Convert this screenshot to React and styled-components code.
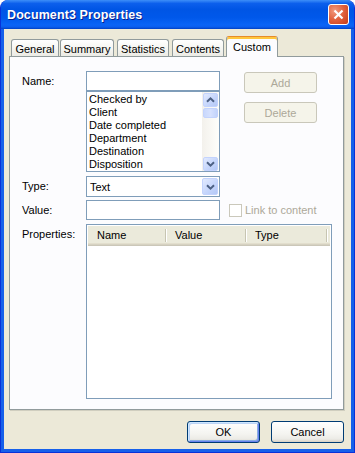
import styled, { createGlobalStyle } from 'styled-components';

const GlobalStyle = createGlobalStyle`
  html, body {
    margin: 0;
    padding: 0;
    background: #ffffff;
  }
  body {
    font-family: "Liberation Sans", Arial, sans-serif;
    font-size: 11px;
    color: #000;
  }
  * { box-sizing: border-box; }
`;

const Window = styled.div`
  width: 355px;
  height: 453px;
  display: flex;
  flex-direction: column;
  border-radius: 8px 8px 0 0;
  overflow: hidden;
  background: #1660ea;
  border: 1px solid #0831d9;
  border-top: 0;
`;

const TitleBar = styled.div`
  height: 29px;
  flex: none;
  display: flex;
  align-items: center;
  justify-content: space-between;
  padding: 0 5px 0 6px;
  background: linear-gradient(
    180deg,
    #3d8ef8 0%,
    #0c5fec 12%,
    #0055e5 32%,
    #0058ea 60%,
    #0a64f6 86%,
    #0b5eee 93%,
    #0040c4 100%
  );
`;

const Title = styled.div`
  color: #ffffff;
  font-weight: bold;
  font-size: 12.5px;
  letter-spacing: 0.1px;
  text-shadow: 1px 1px 0 #0a1e8a;
  margin-top: 1px;
`;

const CloseButton = styled.div`
  width: 21px;
  height: 21px;
  border: 1px solid #ffffff;
  border-radius: 3px;
  display: flex;
  align-items: center;
  justify-content: center;
  background: radial-gradient(circle at 30% 30%, #f29a7e 0%, #e0603c 50%, #c43b17 100%);
`;

const Body = styled.div`
  flex: 1;
  display: flex;
  flex-direction: column;
  margin: 0 3px 3px;
  padding: 7px 7px 6px 5px;
  background: #ece9d8;
`;

const TabRow = styled.div`
  height: 20px;
  flex: none;
  display: flex;
  align-items: flex-end;
  padding-left: 2px;
`;

const Tab = styled.div`
  width: ${p => p.$w}px;
  margin-right: ${p => p.$gap || 0}px;
  height: ${p => (p.$active ? 21 : 17)}px;
  margin-bottom: ${p => (p.$active ? -1 : 0)}px;
  position: relative;
  z-index: ${p => (p.$active ? 2 : 0)};
  display: flex;
  align-items: center;
  justify-content: center;
  padding-top: ${p => (p.$active ? 0 : 1)}px;
  border: 1px solid #919b9c;
  border-bottom: 0;
  border-radius: 3px 3px 0 0;
  background: ${p =>
    p.$active ? '#fcfcfe' : 'linear-gradient(180deg, #ffffff 0%, #f6f6f2 50%, #ecebe5 100%)'};
  border-top-color: ${p => (p.$active ? '#e68b2c' : '#919b9c')};
  box-shadow: ${p => (p.$active ? 'inset 0 2px 0 #ffc73c' : 'none')};
`;

const Panel = styled.div`
  flex: 1;
  display: flex;
  flex-direction: column;
  border: 1px solid #919b9c;
  background: #fcfcfe;
  padding: 14px 11px 10px 12px;
  box-shadow: 1px 1px 0 #d0cebf;
`;

const Row = styled.div`
  display: flex;
  align-items: ${p => p.$align || 'center'};
  margin-top: ${p => p.$mt || 0}px;
  flex: ${p => (p.$grow ? 1 : 'none')};
`;

const Label = styled.div`
  width: 64px;
  flex: none;
  line-height: 13px;
  padding-top: ${p => p.$top || 0}px;
`;

const FieldStack = styled.div`
  width: 134px;
  display: flex;
  flex-direction: column;
`;

const TextBox = styled.div`
  width: 134px;
  height: 20px;
  border: 1px solid #7f9db9;
  background: #ffffff;
`;

const ListBox = styled.div`
  height: 81px;
  border: 1px solid #7f9db9;
  background: #ffffff;
  display: flex;
  overflow: hidden;
`;

const ListItems = styled.div`
  flex: 1;
  padding: 1px 0 0 2px;
`;

const ListItem = styled.div`
  height: 13px;
  line-height: 13px;
  white-space: nowrap;
`;

const ScrollBar = styled.div`
  width: 17px;
  flex: none;
  display: flex;
  flex-direction: column;
  padding: 1px 1px 0 1px;
  background: linear-gradient(90deg, #f3f1ec 0%, #fefefb 100%);
`;

const ScrollButton = styled.div`
  height: 14px;
  flex: none;
  display: flex;
  align-items: center;
  justify-content: center;
  border: 1px solid #c3d3fd;
  border-radius: 2px;
  background: linear-gradient(135deg, #e2eafe 0%, #c6d6fc 55%, #b4c8f6 100%);
`;

const ScrollThumb = styled.div`
  height: 10px;
  margin-top: 1px;
  border: 1px solid #c3d3fd;
  border-radius: 2px;
  background: linear-gradient(90deg, #c9d8fc 0%, #d6e1fe 50%, #c2d3fb 100%);
`;

const ScrollTrack = styled.div`
  flex: 1;
`;

const SideButtons = styled.div`
  display: flex;
  flex-direction: column;
  gap: 9px;
  margin-left: 24px;
  margin-top: 1px;
`;

const Button = styled.div`
  width: 73px;
  height: ${p => (p.$tall ? 22 : 21)}px;
  display: flex;
  align-items: center;
  justify-content: center;
  border-radius: 3px;
  border: 1px solid ${p => (p.$disabled ? '#c9c7ba' : '#003c74')};
  color: ${p => (p.$disabled ? '#aca899' : '#000000')};
  background: ${p =>
    p.$disabled
      ? '#f5f4ea'
      : 'linear-gradient(180deg, #ffffff 0%, #f4f4f0 60%, #ecebe6 85%, #d6d0c5 100%)'};
  box-shadow: ${p =>
    p.$default
      ? 'inset 1px 1px 0 #cee7ff, inset -1px -1px 0 #6982ee, inset 2px 2px 0 #bcd4f6, inset -2px -2px 0 #89ade4'
      : 'none'};
`;

const Combo = styled.div`
  width: 134px;
  height: 21px;
  border: 1px solid #7f9db9;
  background: #ffffff;
  display: flex;
  align-items: center;
  padding: 1px;
`;

const ComboText = styled.div`
  flex: 1;
  padding-left: 2px;
`;

const ComboButton = styled(ScrollButton)`
  width: 16px;
  height: 17px;
`;

const CheckWrap = styled.div`
  display: flex;
  align-items: center;
  gap: 3px;
  margin-left: 9px;
  color: #aca899;
`;

const CheckBox = styled.div`
  width: 13px;
  height: 13px;
  border: 1px solid #cac8bb;
  background: #ffffff;
`;

const ListView = styled.div`
  width: 246px;
  border: 1px solid #7f9db9;
  background: #ffffff;
  padding: 1px;
  display: flex;
  flex-direction: column;
`;

const Header = styled.div`
  height: 20px;
  display: flex;
  background: #ebeadb;
  box-shadow: inset 0 -1px 0 #cbc7b8, inset 0 -2px 0 #d6d2c2, inset 0 -3px 0 #e2decd;
`;

const HeaderCell = styled.div`
  position: relative;
  width: ${p => (p.$w ? `${p.$w}px` : 'auto')};
  flex: ${p => (p.$w ? 'none' : 1)};
  padding: 0 0 2px 9px;
  display: flex;
  align-items: center;

  &::after {
    content: '';
    display: ${p => (p.$w ? 'block' : 'none')};
    position: absolute;
    right: 0;
    top: 3px;
    bottom: 4px;
    width: 1px;
    background: #c7c5b2;
    box-shadow: 1px 0 0 #ffffff;
  }
`;

const Footer = styled.div`
  flex: none;
  display: flex;
  justify-content: flex-end;
  gap: 11px;
  margin-top: 11px;
`;

const Chevron = ({ down }) => (
  <svg width="9" height="6" viewBox="0 0 9 6">
    <path
      d={down ? 'M1 1.2 L4.5 4.6 L8 1.2' : 'M1 4.8 L4.5 1.4 L8 4.8'}
      stroke="#4d6185"
      strokeWidth="2"
      fill="none"
    />
  </svg>
);

const items = ['Checked by', 'Client', 'Date completed', 'Department', 'Destination', 'Disposition'];

const tabs = [
  { name: 'General', w: 48, gap: 1 },
  { name: 'Summary', w: 54, gap: 3 },
  { name: 'Statistics', w: 52, gap: 3 },
  { name: 'Contents', w: 52, gap: 2 },
  { name: 'Custom', w: 52, active: true },
];

export default function App() {
  return (
    <>
      <GlobalStyle />
      <Window>
        <TitleBar>
          <Title>Document3 Properties</Title>
          <CloseButton>
            <svg width="11" height="11" viewBox="0 0 11 11">
              <path d="M1.5 1.5 L9.5 9.5 M9.5 1.5 L1.5 9.5" stroke="#ffffff" strokeWidth="2.2" />
            </svg>
          </CloseButton>
        </TitleBar>
        <Body>
          <TabRow>
            {tabs.map(t => (
              <Tab key={t.name} $w={t.w} $gap={t.gap} $active={t.active}>
                {t.name}
              </Tab>
            ))}
          </TabRow>
          <Panel>
            <Row $align="flex-start">
              <Label $top={4}>Name:</Label>
              <FieldStack>
                <TextBox />
                <ListBox>
                  <ListItems>
                    {items.map(i => (
                      <ListItem key={i}>{i}</ListItem>
                    ))}
                  </ListItems>
                  <ScrollBar>
                    <ScrollButton>
                      <Chevron />
                    </ScrollButton>
                    <ScrollThumb />
                    <ScrollTrack />
                    <ScrollButton>
                      <Chevron down />
                    </ScrollButton>
                  </ScrollBar>
                </ListBox>
              </FieldStack>
              <SideButtons>
                <Button $disabled>Add</Button>
                <Button $disabled>Delete</Button>
              </SideButtons>
            </Row>
            <Row $mt={4}>
              <Label>Type:</Label>
              <Combo>
                <ComboText>Text</ComboText>
                <ComboButton>
                  <Chevron down />
                </ComboButton>
              </Combo>
            </Row>
            <Row $mt={3}>
              <Label>Value:</Label>
              <TextBox />
              <CheckWrap>
                <CheckBox />
                Link to content
              </CheckWrap>
            </Row>
            <Row $mt={4} $align="stretch" $grow>
              <Label $top={4}>Properties:</Label>
              <ListView>
                <Header>
                  <HeaderCell $w={78}>Name</HeaderCell>
                  <HeaderCell $w={80}>Value</HeaderCell>
                  <HeaderCell $w={81}>Type</HeaderCell>
                  <HeaderCell />
                </Header>
              </ListView>
            </Row>
          </Panel>
          <Footer>
            <Button $tall $default>OK</Button>
            <Button $tall>Cancel</Button>
          </Footer>
        </Body>
      </Window>
    </>
  );
}
